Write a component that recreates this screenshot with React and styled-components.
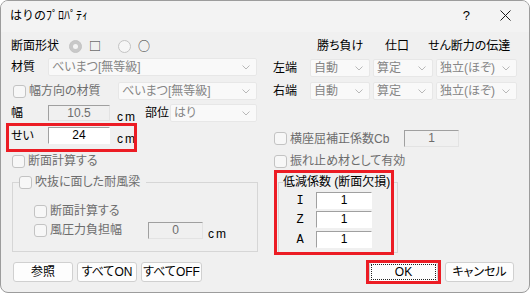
import React from 'react';
import styled, { createGlobalStyle } from 'styled-components';

const FONT = `"Liberation Sans", "Noto Sans CJK JP", "Noto Sans", sans-serif`;
const MONO = `"Liberation Mono", "DejaVu Sans Mono", monospace`;

const Global = createGlobalStyle`
  html, body { margin: 0; padding: 0; background: #ffffff; }
  body { font-family: ${FONT}; font-size: 12px; color: #000; }
  * { box-sizing: border-box; }
`;

const Window = styled.div`
  width: 530px;
  height: 293px;
  border: 1px solid #9c9c9c;
  border-radius: 8px;
  background: #f0f0f0;
  overflow: hidden;
  display: flex;
  flex-direction: column;
  font-feature-settings: "palt";
`;

const TitleBar = styled.div`
  height: 31px;
  flex: none;
  background: #f3f3f3;
  display: flex;
  align-items: center;
  padding: 0 18px 2px 9px;
`;

const TitleText = styled.span`
  font-size: 12px;
  line-height: 14px;
  color: #000;
  font-feature-settings: normal;
`;

const HelpMark = styled.span`
  margin-left: auto;
  font-family: "Liberation Sans", sans-serif;
  font-size: 13px;
  line-height: 14px;
`;

const CloseIcon = styled.svg`
  margin-left: 30px;
  width: 11px;
  height: 11px;
`;

const Body = styled.div`
  flex: 1;
  display: flex;
  flex-direction: column;
  padding: 5px 0 0 10px;
`;

const Main = styled.div`
  display: grid;
  grid-template-columns: 246px 1fr;
  column-gap: 16px;
  align-items: start;
`;

const Column = styled.div`
  display: flex;
  flex-direction: column;
`;

const Row = styled.div`
  display: flex;
  align-items: center;
  height: ${p => p.$h || 18}px;
  margin-top: ${p => p.$mt || 0}px;
  margin-left: ${p => p.$ml || 0}px;
  position: relative;
`;

const Label = styled.span`
  flex: none;
  width: ${p => (p.$w ? `${p.$w}px` : 'auto')};
  margin-left: ${p => p.$ml || 0}px;
  color: ${p => (p.$dim ? '#6d6d6d' : '#000')};
  white-space: nowrap;
  line-height: 14px;
  font-size: 12px;
`;

const Glyph = styled.span`
  margin-left: ${p => p.$ml || 0}px;
  font-family: "Noto Sans CJK JP", sans-serif;
  font-size: 12px;
  line-height: 14px;
  color: #333;
`;

const Radio = styled.span`
  flex: none;
  width: 13px;
  height: 13px;
  border-radius: 50%;
  margin-left: ${p => p.$ml || 0}px;
  border: 1px solid #c4c4c4;
  background: ${p => (p.$checked ? '#c8c8c8' : '#f6f6f6')};
  display: inline-flex;
  align-items: center;
  justify-content: center;
  &::after {
    content: '';
    display: ${p => (p.$checked ? 'block' : 'none')};
    width: 5px;
    height: 5px;
    border-radius: 50%;
    background: #f4f4f4;
  }
`;

const Check = styled.span`
  flex: none;
  width: 13px;
  height: 13px;
  margin-left: ${p => p.$ml || 0}px;
  border: 1px solid #c3c3c3;
  border-radius: 3px;
  background: #f7f7f7;
`;

const SelectBox = styled.div`
  flex: none;
  width: ${p => p.$w}px;
  height: 18px;
  margin-left: ${p => (p.$auto ? 'auto' : `${p.$ml || 0}px`)};
  background: #f9f9f9;
  border: 1px solid #e7e7e7;
  border-radius: 2px;
  display: flex;
  align-items: center;
  justify-content: space-between;
  padding: 0 6px 0 3px;
  color: #858585;
  font-size: 12px;
  line-height: 14px;
  white-space: nowrap;
`;

const Chevron = styled.svg`
  width: 8px;
  height: 5px;
  flex: none;
`;

const Edit = styled.div`
  flex: none;
  width: ${p => p.$w}px;
  height: ${p => p.$h || 17}px;
  margin-left: ${p => p.$ml || 0}px;
  background: ${p => (p.$on ? '#ffffff' : '#f0f0f0')};
  border-top: 1px solid #a0a0a0;
  border-left: 1px solid #a0a0a0;
  border-bottom: 1px solid ${p => (p.$on ? '#ffffff' : '#e3e3e3')};
  border-right: 1px solid ${p => (p.$on ? '#ffffff' : '#e3e3e3')};
  display: flex;
  justify-content: center;
  align-items: flex-start;
  padding-top: 1px;
  font-family: "Liberation Sans", sans-serif;
  font-size: 12px;
  line-height: 12px;
  color: ${p => (p.$on ? '#000' : '#6d6d6d')};
`;

const Unit = styled.span`
  align-self: flex-end;
  margin-left: ${p => p.$ml || 0}px;
  margin-bottom: -1px;
  font-family: "Liberation Sans", sans-serif;
  letter-spacing: 2px;
  font-size: 12px;
  line-height: 12px;
`;

const Highlight = styled.div`
  position: absolute;
  left: ${p => p.$l}px;
  top: ${p => p.$t}px;
  width: ${p => p.$w}px;
  height: ${p => p.$h}px;
  border: 3px solid #ec1c24;
  pointer-events: none;
`;

const Group = styled.fieldset`
  margin: ${p => p.$mt || 0}px 0 0 ${p => p.$ml || 0}px;
  width: ${p => p.$w}px;
  border: 1px solid #d6d6d6;
  padding: 0 0 ${p => p.$pb || 0}px ${p => p.$pl || 0}px;
  min-inline-size: 0;
`;

const GroupWrap = styled.div`
  position: relative;
  margin-top: ${p => p.$mt || 0}px;
  margin-left: ${p => p.$ml || 0}px;
  width: ${p => p.$w}px;
`;

const Legend = styled.legend`
  padding: 0 ${p => p.$pr || 2}px 0 0;
  line-height: 14px;
  height: 14px;
  font-size: 12px;
`;

const LegendInner = styled.span`
  display: inline-flex;
  align-items: center;
  height: 14px;
  color: ${p => (p.$dim ? '#6d6d6d' : '#000')};
`;

const GroupBody = styled.div`
  display: flex;
  flex-direction: column;
  padding-left: ${p => p.$pl || 0}px;
`;

const EndGrid = styled.div`
  display: grid;
  grid-template-columns: 34px 60px 60px 81px;
  column-gap: 3px;
  grid-template-rows: 16px 18px 18px;
  row-gap: 5px;
  align-items: center;
  margin-top: 1px;
`;

const HeadCell = styled.span`
  margin-left: ${p => p.$ml || 0}px;
  line-height: 14px;
  white-space: nowrap;
  font-size: 12px;
`;

const EndLabel = styled.span`
  line-height: 14px;
  font-size: 12px;
`;

const FactorRow = styled.div`
  display: flex;
  align-items: center;
  height: 17px;
  margin-top: ${p => p.$mt || 0}px;
`;

const FactorLabel = styled.span`
  width: 32px;
  text-align: center;
  font-family: ${MONO};
  font-size: 12px;
  line-height: 14px;
`;

const ButtonBar = styled.div`
  margin-top: auto;
  display: flex;
  justify-content: space-between;
  padding: 0 15px 10px 2px;
`;

const ButtonGroup = styled.div`
  display: flex;
  gap: ${p => p.$gap || 4}px;
`;

const Btn = styled.button`
  position: relative;
  width: ${p => p.$w || 60}px;
  height: 20px;
  padding: 0;
  background: #fdfdfd;
  border: 1px solid #d0d0d0;
  border-radius: 3px;
  font-family: ${FONT};
  font-size: 12px;
  line-height: 14px;
  color: #000;
  font-feature-settings: "palt";
`;

const FocusRing = styled.span`
  position: absolute;
  inset: 1px;
  border: 1px dotted #222;
  pointer-events: none;
`;

const Select = ({ w, ml, auto, children }) => (
  <SelectBox $w={w} $ml={ml} $auto={auto}>
    <span>{children}</span>
    <Chevron viewBox="0 0 8 5">
      <path d="M0.5 0.5 L4 4 L7.5 0.5" fill="none" stroke="#b8b8b8" strokeWidth="1" />
    </Chevron>
  </SelectBox>
);

export default function App() {
  return (
    <>
      <Global />
      <Window>
        <TitleBar>
          <TitleText>はりのﾌﾟﾛﾊﾟﾃｨ</TitleText>
          <HelpMark>?</HelpMark>
          <CloseIcon viewBox="0 0 11 11">
            <path d="M0.5 0.5 L10.5 10.5 M10.5 0.5 L0.5 10.5" stroke="#1a1a1a" strokeWidth="1" fill="none" />
          </CloseIcon>
        </TitleBar>
        <Body>
          <Main>
            <Column>
              <Row>
                <Label $w={58}>断面形状</Label>
                <Radio $checked />
                <Glyph $ml={7}>□</Glyph>
                <Radio $ml={17} />
                <Glyph $ml={7}>○</Glyph>
              </Row>
              <Row $mt={3}>
                <Label $w={37}>材質</Label>
                <Select w={209} auto>べいまつ[無等級]</Select>
              </Row>
              <Row $mt={6}>
                <Check $ml={2} />
                <Label $ml={3} $dim>幅方向の材質</Label>
                <Select w={139} auto>べいまつ[無等級]</Select>
              </Row>
              <Row $mt={4}>
                <Label $w={37}>幅</Label>
                <Edit $w={62} $h={16}>10.5</Edit>
                <Unit $ml={7}>cm</Unit>
                <Label $ml={8}>部位</Label>
                <Select w={87} auto>はり</Select>
              </Row>
              <Row $mt={5} $h={17}>
                <Label $w={37}>せい</Label>
                <Edit $w={62} $on>24</Edit>
                <Unit $ml={7}>cm</Unit>
                <Highlight $l={-5} $t={-4} $w={131} $h={29} />
              </Row>
              <Row $mt={10} $h={14}>
                <Check $ml={1} />
                <Label $ml={3} $dim>断面計算する</Label>
              </Row>
              <Group $mt={7} $ml={1} $w={246} $pl={6} $pb={12}>
                <Legend $pr={6}>
                  <LegendInner $dim>
                    <Check />
                    <Label $ml={3} $dim>吹抜に面した耐風梁</Label>
                  </LegendInner>
                </Legend>
                <GroupBody $pl={15}>
                  <Row $mt={15} $h={14}>
                    <Check />
                    <Label $ml={3} $dim>断面計算する</Label>
                  </Row>
                  <Row $mt={3}>
                    <Check />
                    <Label $ml={3} $w={98} $dim>風圧力負担幅</Label>
                    <Edit $w={55}>0</Edit>
                    <Unit $ml={5}>cm</Unit>
                  </Row>
                </GroupBody>
              </Group>
            </Column>

            <Column>
              <EndGrid>
                <span />
                <HeadCell $ml={7}>勝ち負け</HeadCell>
                <HeadCell $ml={12}>仕口</HeadCell>
                <HeadCell $ml={-8}>せん断力の伝達</HeadCell>
                <EndLabel>左端</EndLabel>
                <Select w={60}>自動</Select>
                <Select w={60}>算定</Select>
                <Select w={81}>独立(ほぞ)</Select>
                <EndLabel>右端</EndLabel>
                <Select w={60}>自動</Select>
                <Select w={60}>算定</Select>
                <Select w={81}>独立(ほぞ)</Select>
              </EndGrid>
              <Row $mt={30} $h={17}>
                <Check $ml={1} />
                <Label $ml={3} $w={114} $dim>横座屈補正係数Cb</Label>
                <Edit $w={55}>1</Edit>
              </Row>
              <Row $mt={7} $h={14}>
                <Check $ml={1} />
                <Label $ml={3} $dim>振れ止め材として有効</Label>
              </Row>
              <GroupWrap $mt={7} $ml={5} $w={120}>
                <Group $w={120} $pl={4} $pb={4}>
                  <Legend $pr={2}>
                    <LegendInner>低減係数 (断面欠損)</LegendInner>
                  </Legend>
                  <GroupBody $pl={1}>
                    <FactorRow $mt={3}>
                      <FactorLabel>I</FactorLabel>
                      <Edit $w={56} $on>1</Edit>
                    </FactorRow>
                    <FactorRow $mt={2}>
                      <FactorLabel>Z</FactorLabel>
                      <Edit $w={56} $on>1</Edit>
                    </FactorRow>
                    <FactorRow $mt={3}>
                      <FactorLabel>A</FactorLabel>
                      <Edit $w={56} $on>1</Edit>
                    </FactorRow>
                  </GroupBody>
                </Group>
                <Highlight $l={-4} $t={-5} $w={120} $h={85} />
              </GroupWrap>
            </Column>
          </Main>

          <ButtonBar>
            <ButtonGroup $gap={4}>
              <Btn $w={60}>参照</Btn>
              <Btn $w={60}>すべてON</Btn>
              <Btn $w={61}>すべてOFF</Btn>
            </ButtonGroup>
            <ButtonGroup $gap={7}>
              <Btn $w={69}>
                OK
                <FocusRing />
                <Highlight $l={-4} $t={-3} $w={75} $h={24} />
              </Btn>
              <Btn $w={69}>キャンセル</Btn>
            </ButtonGroup>
          </ButtonBar>
        </Body>
      </Window>
    </>
  );
}
